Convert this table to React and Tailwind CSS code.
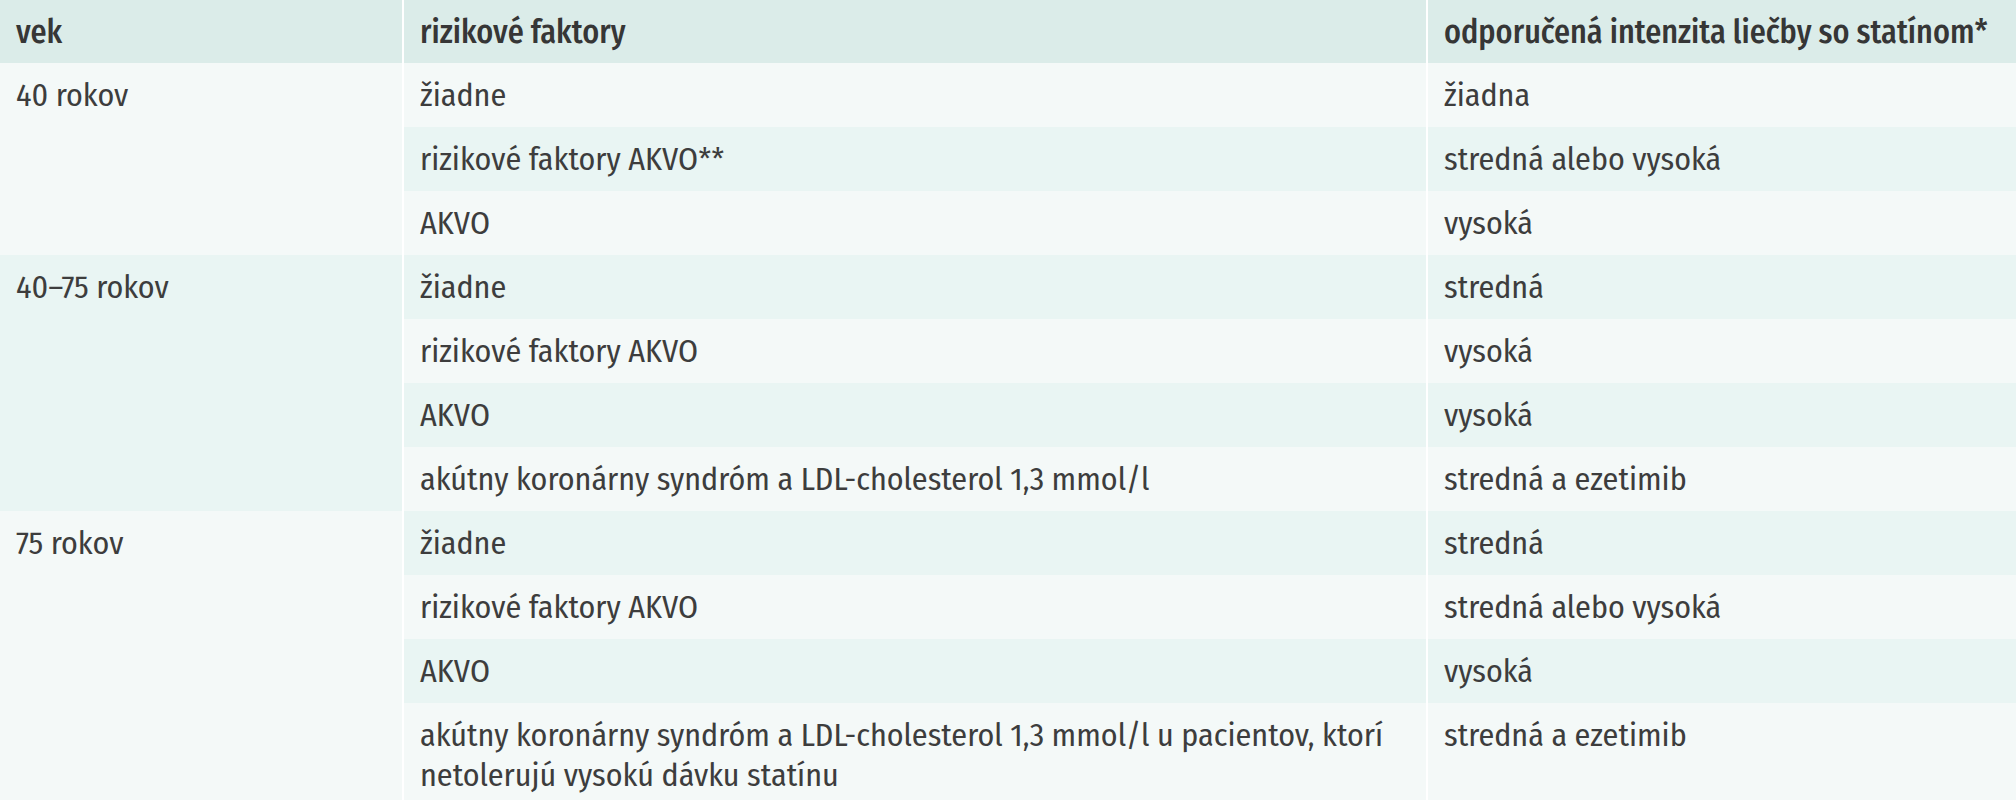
const groups = [
  {
    age: '40 rokov',
    rows: [
      ['žiadne', 'žiadna'],
      ['rizikové faktory AKVO**', 'stredná alebo vysoká'],
      ['AKVO', 'vysoká'],
    ],
  },
  {
    age: '40–75 rokov',
    rows: [
      ['žiadne', 'stredná'],
      ['rizikové faktory AKVO', 'vysoká'],
      ['AKVO', 'vysoká'],
      ['akútny koronárny syndróm a LDL-cholesterol 1,3 mmol/l', 'stredná a ezetimib'],
    ],
  },
  {
    age: '75 rokov',
    rows: [
      ['žiadne', 'stredná'],
      ['rizikové faktory AKVO', 'stredná alebo vysoká'],
      ['AKVO', 'vysoká'],
      [
        'akútny koronárny syndróm a LDL-cholesterol 1,3 mmol/l u pacientov, ktorí netolerujú vysokú dávku statínu',
        'stredná a ezetimib',
      ],
    ],
  },
];

export default function App() {
  let rowIndex = 0;
  return (
    <div
      className="w-[2016px] h-[800px] overflow-hidden bg-white"
      style={{ fontFamily: '"Fira Sans Condensed", "Roboto Condensed", sans-serif' }}
    >
      <table className="w-full table-fixed border-collapse text-[32px] leading-[40px] text-[#3d3d3d]">
        <colgroup>
          <col className="w-[403px]" />
          <col className="w-[1024px]" />
          <col />
        </colgroup>
        <thead>
          <tr className="h-[63px] bg-[#dbece9] text-[#363636]">
            <th className="px-4 py-0 text-left align-middle font-medium">vek</th>
            <th className="border-l-2 border-white px-4 py-0 text-left align-middle font-medium">rizikové faktory</th>
            <th className="border-l-2 border-white px-4 py-0 text-left align-middle font-medium">
              odporučená intenzita liečby so statínom*
            </th>
          </tr>
        </thead>
        <tbody>
          {groups.map((g, gi) =>
            g.rows.map((r, ri) => {
              rowIndex += 1;
              const even = rowIndex % 2 === 0;
              const rowBg = even ? 'bg-[#e9f5f3]' : 'bg-[#f4f9f8]';
              return (
                <tr key={g.age + ri} className={rowBg}>
                  {ri === 0 && (
                    <td
                      rowSpan={g.rows.length}
                      className={`px-4 py-3 align-top ${gi % 2 === 1 ? 'bg-[#e9f5f3]' : 'bg-[#f4f9f8]'}`}
                    >
                      {g.age}
                    </td>
                  )}
                  <td className="border-l-2 border-white px-4 py-3 align-top">{r[0]}</td>
                  <td className="border-l-2 border-white px-4 py-3 align-top">{r[1]}</td>
                </tr>
              );
            })
          )}
        </tbody>
      </table>
    </div>
  );
}
